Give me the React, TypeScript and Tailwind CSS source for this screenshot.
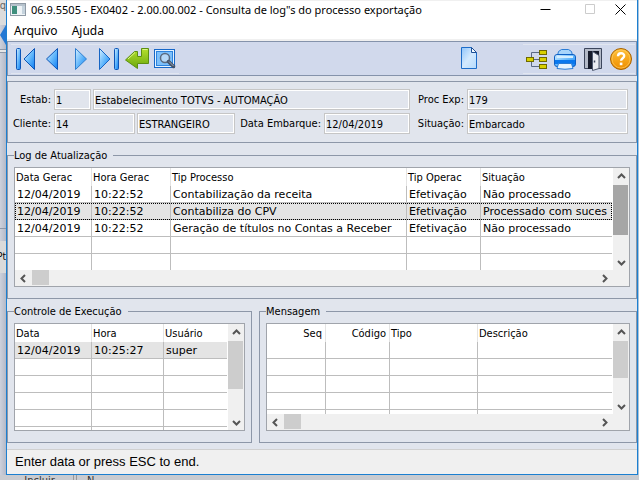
import type { ReactNode } from "react";

const verdana = "font-['DejaVu_Sans',sans-serif] text-[11px]";

type Column = { label: string; width?: string; right?: boolean };

const logColumns: Column[] = [
  { label: "Data Gerac", width: "w-[77px]" },
  { label: "Hora Gerac", width: "w-[79px]" },
  { label: "Tip Processo", width: "w-[236px]" },
  { label: "Tip Operac", width: "w-[74px]" },
  { label: "Situação" },
];

const logRows = [
  ["12/04/2019", "10:22:52", "Contabilização da receita", "Efetivação", "Não processado"],
  ["12/04/2019", "10:22:52", "Contabiliza do CPV", "Efetivação", "Processado com suces"],
  ["12/04/2019", "10:22:52", "Geração de títulos no Contas a Receber", "Efetivação", "Não processado"],
];

const execColumns: Column[] = [
  { label: "Data", width: "w-[77px]" },
  { label: "Hora", width: "w-[72px]" },
  { label: "Usuário" },
];

const execRows = [["12/04/2019", "10:25:27", "super"]];

const msgColumns: Column[] = [
  { label: "Seq", width: "w-[59px]", right: true },
  { label: "Código", width: "w-[64px]", right: true },
  { label: "Tipo", width: "w-[88px]" },
  { label: "Descrição" },
];

const Gradients = () => (
  <svg className="absolute h-0 w-0" aria-hidden="true">
    <defs>
      <linearGradient id="blue" x1="0" y1="0" x2="1" y2="1">
        <stop offset="0" stopColor="#d6f0ff" />
        <stop offset="0.55" stopColor="#5db4fb" />
        <stop offset="1" stopColor="#0b7bf2" />
      </linearGradient>
      <linearGradient id="page" x1="0" y1="0" x2="1" y2="1">
        <stop offset="0" stopColor="#8fc4fa" />
        <stop offset="0.5" stopColor="#d3e9fe" />
        <stop offset="1" stopColor="#b4dafc" />
      </linearGradient>
      <linearGradient id="green" x1="0" y1="0" x2="0" y2="1">
        <stop offset="0" stopColor="#b5e02e" />
        <stop offset="1" stopColor="#6aa80a" />
      </linearGradient>
      <linearGradient id="orange" x1="0" y1="0" x2="0" y2="1">
        <stop offset="0" stopColor="#ffc13a" />
        <stop offset="1" stopColor="#ee8d00" />
      </linearGradient>
    </defs>
  </svg>
);

const Icon = ({ children }: { children: ReactNode }) => (
  <svg width="24" height="24" viewBox="0 0 24 24" aria-hidden="true">
    {children}
  </svg>
);

const FirstIcon = () => (
  <Icon>
    <rect x="3.5" y="1.5" width="4" height="21" rx="1" fill="url(#blue)" stroke="#0c55b8" />
    <path d="M21.5 1.5v21L11 12z" fill="url(#blue)" stroke="#0c55b8" strokeLinejoin="round" />
  </Icon>
);

const PrevIcon = () => (
  <Icon>
    <path d="M16.5 1.5v21L5.5 12z" fill="url(#blue)" stroke="#0c55b8" strokeLinejoin="round" />
  </Icon>
);

const NextIcon = () => (
  <Icon>
    <path d="M6.5 1.5v21L17.5 12z" fill="url(#blue)" stroke="#2f7fd0" strokeLinejoin="round" />
  </Icon>
);

const LastIcon = () => (
  <Icon>
    <path d="M2.5 1.5v21L13 12z" fill="url(#blue)" stroke="#1765c4" strokeLinejoin="round" />
    <rect x="17.5" y="1.5" width="4" height="21" rx="1" fill="url(#blue)" stroke="#0c55b8" />
  </Icon>
);

const EnterIcon = () => (
  <Icon>
    <path d="M16.5 1.5h7v15h-11v5L.5 13l9-8.5h3v5h4z" fill="url(#green)" stroke="#5c8f10" strokeLinejoin="round" />
    <path d="M17.5 2.5h5M3 12l7-6.5" stroke="#dcf58a" />
  </Icon>
);

const SearchIcon = () => (
  <Icon>
    <rect x="1.5" y="2.5" width="20" height="18" fill="#e4f3ff" stroke="#1667c8" />
    <rect x="3.5" y="4.5" width="16" height="14" fill="#7cc0fb" stroke="#2d83dd" />
    <circle cx="12" cy="11" r="4.5" fill="#b5d8f7" stroke="#5a6b80" strokeWidth="1.5" />
    <path d="M15.5 14.5l5 5" stroke="#44546a" strokeWidth="3.5" strokeLinecap="round" />
    <path d="M16 14.5l4.5 4.5" stroke="#9aa7ba" />
  </Icon>
);

const NewIcon = () => (
  <Icon>
    <path d="M4.5 1.5h10l5 5v16h-15z" fill="url(#page)" stroke="#1c6cc9" />
    <path d="M14.5 1.5v5h5z" fill="#f5fbff" stroke="#1c4f97" strokeLinejoin="round" />
  </Icon>
);

const TreeIcon = () => (
  <Icon>
    <path d="M9 12.5h5M6.5 10V5.5H14M6.5 15v4.5H14" fill="none" stroke="#5b6a86" />
    <g fill="#d8d100" stroke="#6f6a00">
      <rect x="1.5" y="10.5" width="7" height="4" />
      <rect x="14.5" y="3.5" width="7" height="4" />
      <rect x="14.5" y="10.5" width="7" height="4" />
      <rect x="14.5" y="17.5" width="7" height="4" />
    </g>
  </Icon>
);

const PrintIcon = () => (
  <Icon>
    <path d="M4.5 8.5l1-4 3-2h7l3 2 1 4z" fill="#a8d5fb" stroke="#2a7cd6" />
    <rect x="1.5" y="7.5" width="21" height="12" rx="2.5" fill="url(#blue)" stroke="#0d5fc4" />
    <path d="M2 13h20v4H2z" fill="#0a78ee" />
    <path d="M4 10h16" stroke="#d5eeff" strokeWidth="2" />
    <path d="M5.5 16.5h13l1.5 5q-8 1.5-16 0z" fill="#e6f4ff" stroke="#2a7cd6" />
  </Icon>
);

const DoorIcon = () => (
  <Icon>
    <path d="M3.5 1.5h17v20h-17z" fill="#b3bac8" stroke="#3c465c" />
    <path d="M7 4h11v18H7z" fill="#161c2c" />
    <path d="M11.5 4.5l6.5 4v13l-6.5 2z" fill="#e9ecf2" stroke="#4f5a70" />
    <path d="M13.5 13.5v2" stroke="#3c465c" strokeWidth="1.5" />
  </Icon>
);

const HelpIcon = () => (
  <Icon>
    <circle cx="12" cy="12" r="10.5" fill="url(#orange)" stroke="#a86200" />
    <circle cx="12" cy="12" r="9" fill="none" stroke="#ffd26b" strokeWidth="0.6" />
    <path d="M9 9.3c0-4 6.2-4 6.2-.3 0 2.2-3.1 2.3-3.1 4.8" fill="none" stroke="#fff" strokeWidth="2.4" />
    <rect x="10.8" y="15.6" width="2.6" height="2.6" fill="#fff" />
  </Icon>
);

const ToolButton = ({ label, children }: { label: string; children: ReactNode }) => (
  <button type="button" aria-label={label} className="flex h-7 w-7 items-center justify-center">
    {children}
  </button>
);

const arrows = {
  up: "M1 6l3.5-3.5L8 6",
  down: "M1 3l3.5 3.5L8 3",
  left: "M6 1L2.5 4.5L6 8",
  right: "M3 1l3.5 3.5L3 8",
};

const ScrollArrow = ({ dir }: { dir: keyof typeof arrows }) => (
  <button type="button" aria-label={dir} className="flex h-4 w-4 shrink-0 items-center justify-center">
    <svg width="9" height="9" viewBox="0 0 9 9" aria-hidden="true">
      <path d={arrows[dir]} fill="none" stroke="#555" strokeWidth="2" />
    </svg>
  </button>
);

const VScroll = ({ thumb }: { thumb: string }) => (
  <div className="flex w-4 shrink-0 flex-col justify-between bg-[#f0f0f0] pr-px">
    <div>
      <div className="flex h-[17px] items-center">
        <ScrollArrow dir="up" />
      </div>
      <div className={thumb} />
    </div>
    <ScrollArrow dir="down" />
  </div>
);

const HScroll = () => (
  <div className="flex h-4 shrink-0 items-center bg-[#f0f0f0] pr-[17px]">
    <ScrollArrow dir="left" />
    <div className="mb-px ml-px h-[15px] w-[17px] bg-[#cdcdcd]" />
    <div className="flex-1" />
    <ScrollArrow dir="right" />
  </div>
);

type GridProps = {
  label: string;
  columns: Column[];
  rows: string[][];
  count: number;
  selected?: number;
  focused?: boolean;
  height: string;
  thumb: string;
  horizontal?: boolean;
};

const Grid = ({ label, columns, rows, count, selected, focused, height, thumb, horizontal }: GridProps) => (
  <div className={`flex flex-col border border-[#a0a4ab] bg-white ${height}`}>
    <div className="flex min-h-0 flex-1">
      <div className="min-w-0 flex-1 overflow-hidden pr-px">
        <table aria-label={label} className="w-full table-fixed border-separate border-spacing-0">
          <thead>
            <tr className="h-[18px]">
              {columns.map((c, i) => (
                <th
                  key={c.label}
                  className={`overflow-hidden p-0 pt-px leading-[17px] font-normal whitespace-nowrap ${c.width ?? ""} ${c.right ? "pr-[3px] text-right" : "pl-px text-left"} ${i < columns.length - 1 ? "border-r border-[#e4e4e4]" : ""}`}
                >
                  {c.label}
                </th>
              ))}
            </tr>
          </thead>
          <tbody className={verdana}>
            {Array.from({ length: count }, (_, r) => (
              <tr
                key={r}
                className={`h-[17px] ${r === selected ? "bg-[#e4e4e4]" : ""} ${r === selected && focused ? "outline-1 -outline-offset-1 outline-black outline-dotted" : ""}`}
              >
                {columns.map((c, i) => (
                  <td
                    key={c.label}
                    className={`overflow-hidden border-b border-[#bdbdbd] p-0 pt-px pl-0.5 leading-[15px] whitespace-nowrap ${i < columns.length - 1 ? "border-r" : ""}`}
                  >
                    {rows[r]?.[i]}
                  </td>
                ))}
              </tr>
            ))}
          </tbody>
        </table>
      </div>
      <VScroll thumb={thumb} />
    </div>
    {horizontal && <HScroll />}
  </div>
);

const Group = ({ title, className = "", children }: { title: string; className?: string; children: ReactNode }) => (
  <fieldset className={`min-w-0 border border-[#8d97a8] px-1.5 pb-[11px] ${className}`}>
    <legend className="pt-0.5 pr-1.5 leading-[14px]">{title}</legend>
    <div className="pt-1">{children}</div>
  </fieldset>
);

const Field = ({ id, label, labelWidth, width, value }: { id: string; label: string; labelWidth?: string; width: string; value: string }) => (
  <>
    {labelWidth && (
      <label htmlFor={id} className={`shrink-0 pr-[3px] text-right whitespace-nowrap ${labelWidth}`}>
        {label}
      </label>
    )}
    <input
      id={id}
      aria-label={labelWidth ? undefined : label}
      readOnly
      value={value}
      className={`h-[21px] min-w-0 border border-[#c6c6c6] pt-px pl-px inset-ring inset-ring-white outline-none ${width}`}
    />
  </>
);

const App = () => (
  <div className="flex min-h-screen flex-col bg-[#c9cbd0] font-['DejaVu_Sans_Condensed','DejaVu_Sans',sans-serif] text-[11px] leading-4 text-black">
    <Gradients />
    <div className="flex">
      {/* Window behind, left edge */}
      <div className="flex w-1.5 shrink-0 flex-col overflow-hidden bg-linear-to-r from-[#cdd1dc] to-[#b4b9c7]">
        <div className="flex h-[25px] justify-end bg-[#dcdcdc] leading-3 text-[#666]">q</div>
        <svg width="6" height="20" viewBox="0 0 6 20" aria-hidden="true">
          <path d="M6 0v20L0 10z" fill="#2478d4" />
        </svg>
        <div className="mt-1 h-1 border-y border-[#8d97a8] bg-[#e6e6e6]" />
        <div className="h-44 border-b border-[#8d97a8]" />
        <div className="mt-3 flex h-8 justify-end bg-[#dadada] pt-2 text-[10px]">Pt</div>
      </div>

      <div className="min-w-0 flex-1 border-x border-b border-[#1c7fd0] bg-[#e1e5ed]">
        <header className="border-t border-b-2 border-[#f0f0f0] bg-white font-['Noto_Sans',sans-serif] text-[11px]">
          <div className="flex h-[17px] items-center justify-between pl-[3px]">
            <div className="flex items-center gap-[5px]">
              <svg width="16" height="13" viewBox="0 0 16 13" aria-hidden="true">
                <rect x="0.5" y="0.5" width="15" height="12" fill="#eef3f6" stroke="#8f9aa5" />
                <path d="M1 1h14v2H1z" fill="#b6c2cc" />
                <path d="M2 3h5v8H2z" fill="#3f8f7d" />
                <path d="M12 3h3v8h-3z" fill="#c5d3dd" />
              </svg>
              <h1 className="whitespace-nowrap">06.9.5505 - EX0402 - 2.00.00.002 - Consulta de log"s do processo exportação</h1>
            </div>
            <div className="flex pr-[11px]">
              <button type="button" aria-label="Minimizar" className="flex w-[45px] justify-center">
                <svg width="11" height="11" viewBox="0 0 11 11"><path d="M.5 5.5h10" stroke="#000" /></svg>
              </button>
              <button type="button" aria-label="Maximizar" disabled className="flex w-[45px] justify-center">
                <svg width="11" height="11" viewBox="0 0 11 11"><path d="M.5.5h9v9h-9z" fill="none" stroke="#ccc" /></svg>
              </button>
              <button type="button" aria-label="Fechar" className="ml-px flex w-3 justify-center">
                <svg width="11" height="11" viewBox="0 0 11 11"><path d="M.5.5l10 10M10.5.5l-10 10" stroke="#000" /></svg>
              </button>
            </div>
          </div>
          <nav className="flex h-[21px] items-center gap-3.5 pt-1 pl-[7px] text-[12px]">
            <button type="button">Arquivo</button>
            <button type="button">Ajuda</button>
          </nav>
        </header>

        <div className="flex h-[35px] items-center justify-between border border-[#8593ab] bg-[#d1d9ec] pr-px pl-[3px]">
          <div className="flex border-y border-[#e1e6f0]">
            <ToolButton label="Primeiro"><FirstIcon /></ToolButton>
            <ToolButton label="Anterior"><PrevIcon /></ToolButton>
            <ToolButton label="Próximo"><NextIcon /></ToolButton>
            <ToolButton label="Último"><LastIcon /></ToolButton>
            <ToolButton label="Vá para"><EnterIcon /></ToolButton>
            <ToolButton label="Pesquisa"><SearchIcon /></ToolButton>
          </div>
          <div className="flex items-start gap-10">
            <ToolButton label="Novo"><NewIcon /></ToolButton>
            <div className="flex border-y border-[#e1e6f0]">
              <ToolButton label="Consultas relacionadas"><TreeIcon /></ToolButton>
              <ToolButton label="Relatórios"><PrintIcon /></ToolButton>
              <ToolButton label="Sair"><DoorIcon /></ToolButton>
              <ToolButton label="Ajuda"><HelpIcon /></ToolButton>
            </div>
          </div>
        </div>

        <main className="flex flex-col gap-1 pt-[5px] pb-1.5">
          <section className="flex flex-col gap-[3px] border border-[#8d97a8] pt-[7px] pr-2 pb-2">
            <div className="flex items-center">
              <Field id="estab" label="Estab:" labelWidth="w-[46px]" width="w-[37px]" value="1" />
              <div className="ml-0.5 flex flex-1">
                <Field id="estab-nome" label="Nome do estabelecimento" width="flex-1" value="Estabelecimento TOTVS - AUTOMAÇÃO" />
              </div>
              <Field id="proc" label="Proc Exp:" labelWidth="w-[57px]" width="w-[161px]" value="179" />
            </div>
            <div className="flex items-center">
              <Field id="cliente" label="Cliente:" labelWidth="w-[46px]" width="w-[81px]" value="14" />
              <div className="ml-0.5 flex">
                <Field id="cliente-nome" label="Nome do cliente" width="w-[98px]" value="ESTRANGEIRO" />
              </div>
              <Field id="embarque" label="Data Embarque:" labelWidth="flex-1" width="w-[86px]" value="12/04/2019" />
              <Field id="situacao" label="Situação:" labelWidth="w-[57px]" width="w-[161px]" value="Embarcado" />
            </div>
          </section>

          <Group title="Log de Atualização">
            <Grid
              label="Log de Atualização"
              columns={logColumns}
              rows={logRows}
              count={5}
              selected={1}
              focused
              height="h-[120px]"
              thumb="h-[50px] bg-[#a6a6a6]"
              horizontal
            />
          </Group>

          <div className="flex gap-[7px]">
            <Group title="Controle de Execução" className="w-[245px] shrink-0">
              <Grid
                label="Controle de Execução"
                columns={execColumns}
                rows={execRows}
                count={6}
                selected={0}
                height="h-[108px]"
                thumb="h-12 bg-[#cdcdcd]"
              />
            </Group>
            <Group title="Mensagem" className="flex-1">
              <Grid
                label="Mensagem"
                columns={msgColumns}
                rows={[]}
                count={5}
                height="h-[108px]"
                thumb="h-[37px] bg-[#cdcdcd]"
                horizontal
              />
            </Group>
          </div>
        </main>

        <footer className="h-[25px] border-t border-[#d0d0d0] bg-[#f0f0f0] pl-2 font-['Liberation_Sans',sans-serif] text-[13px] leading-6">
          Enter data or press ESC to end.
        </footer>
      </div>

      {/* Window behind, right edge */}
      <div className="w-px shrink-0 bg-[#a9c4dd]" />
    </div>

    {/* Window behind, bottom edge */}
    <div className="flex h-[5px] overflow-hidden pl-1.5 leading-[12px] text-[#333]">
      <span className="w-[68px] border-r border-[#999] text-center">Incluir</span>
      <span className="ml-0.5 border-l border-[#999] pl-2.5">N</span>
    </div>
  </div>
);

export default App;
